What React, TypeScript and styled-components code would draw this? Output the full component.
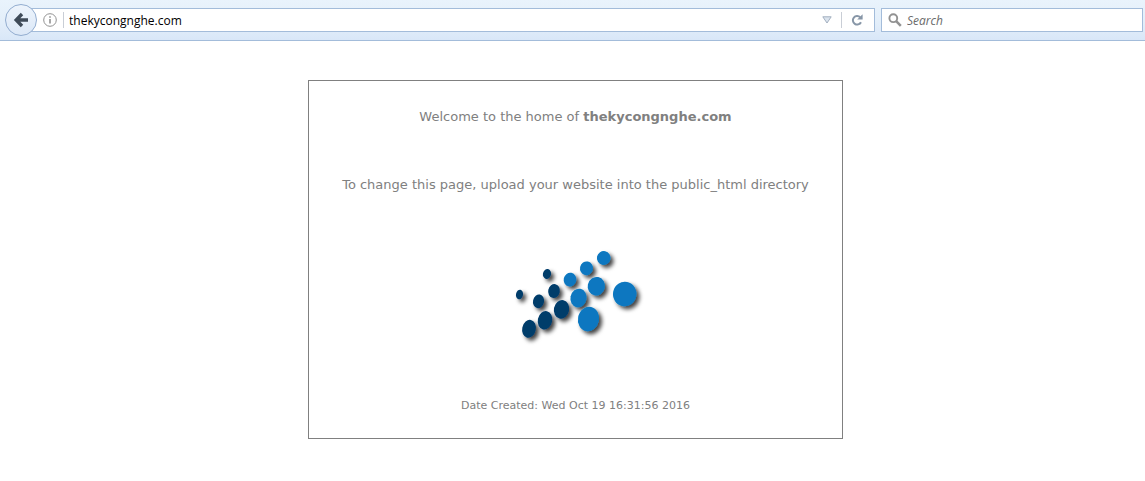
import React from "react";
import styled, { createGlobalStyle } from "styled-components";

const GlobalStyle = createGlobalStyle`
  * { box-sizing: border-box; }
  body { margin: 0; background: #fff; }
`;

const Toolbar = styled.header`
  display: flex;
  align-items: center;
  height: 41px;
  padding: 0 2px 0 5px;
  border-bottom: 1px solid #a3bcda;
  background: linear-gradient(#e9f3fc, #e4effa 50%, #d9e7f8);
`;

const BackButton = styled.button`
  flex: none;
  display: grid;
  place-items: center;
  width: 32px;
  height: 32px;
  padding: 0;
  border: 1px solid #93add0;
  border-radius: 50%;
  background: linear-gradient(#edf4fc, #dce8f7);
  z-index: 1;
`;

const Field = styled.form`
  display: flex;
  align-items: center;
  height: 24px;
  border: 1px solid #a3bcda;
  background: #fff;
`;

const AddressField = styled(Field)`
  flex: 1;
  min-width: 0;
  margin: 0 6px 0 -8px;
  padding: 0 11px 0 13px;
`;

const SearchField = styled(Field)`
  flex: 0 1 262px;
  min-width: 0;
  padding: 0 6px;
  gap: 5px;
`;

const TextInput = styled.input`
  flex: 1;
  min-width: 0;
  padding: 0;
  border: 0;
  outline: 0;
  background: transparent;
  color: #000;
  font: 12px "Open Sans", "Noto Sans", sans-serif;
  &::placeholder { color: #6b6b6b; font-style: italic; opacity: 1; }
`;

const IconButton = styled.button`
  flex: none;
  display: grid;
  place-items: center;
  padding: 0;
  border: 0;
  background: none;
`;

const Divider = styled.span<{ $before: number; $after: number }>`
  flex: none;
  width: 1px;
  height: 16px;
  margin: 0 ${(p) => p.$after}px 0 ${(p) => p.$before}px;
  background: #c9ced6;
`;

const Page = styled.main`
  display: flex;
  justify-content: center;
  padding: 39px 0 39px 6px;
`;

const Notice = styled.section`
  display: flex;
  flex-direction: column;
  align-items: center;
  padding: 28px 33px 25px;
  border: 1px solid #808080;
  color: #808080;
  font: 13px/16px Verdana, "DejaVu Sans", sans-serif;
  text-align: center;
`;

const Line = styled.p`
  margin: 0 0 52px;
`;

const Logo = styled.svg`
  display: block;
  margin-bottom: 53px;
`;

const Created = styled.p`
  margin: 0;
  font-size: 11px;
  line-height: 14px;
`;

type Dot = [x: number, y: number, rx: number, ry: number];

const navyDots: Dot[] = [
  [14.5, 54.5, 3.5, 4.9],
  [42, 34, 4.1, 5],
  [33.5, 61.3, 5.5, 6.9],
  [49, 51, 5.8, 7],
  [24, 88.8, 6.8, 9.1],
  [40, 80.3, 7.2, 9.3],
  [56.5, 69.4, 7.6, 9.4],
];

const blueDots: Dot[] = [
  [65, 39.6, 6.3, 6.9],
  [81.5, 28.3, 6.5, 6.9],
  [98.7, 18, 6.8, 7],
  [73.5, 58, 8, 9.4],
  [91.3, 46.2, 8.6, 9.3],
  [83.5, 79, 10.5, 12.3],
  [119.7, 54, 11.7, 12.2],
];

function Dots({ dots, fill }: { dots: Dot[]; fill: string }) {
  return (
    <g fill={fill}>
      {dots.map(([x, y, rx, ry]) => (
        <ellipse key={`${x}-${y}`} cx={x} cy={y} rx={rx} ry={ry} transform={`rotate(12 ${x} ${y})`} />
      ))}
    </g>
  );
}

export default function App() {
  const stop = (e: React.FormEvent) => e.preventDefault();
  return (
    <>
      <GlobalStyle />
      <Toolbar>
        <BackButton type="button" aria-label="Back">
          <svg width="16" height="16" viewBox="0 0 16 16" fill="none" stroke="#3f4b59" strokeWidth="3.4">
            <path d="M9 2 3.2 8 9 14M3 8h12" />
          </svg>
        </BackButton>
        <AddressField onSubmit={stop}>
          <IconButton type="button" aria-label="Site information">
            <svg width="14" height="14" viewBox="0 0 14 14" fill="none" stroke="#929292">
              <circle cx="7" cy="7" r="6.3" />
              <path d="M7 6v4.5M7 3.2v1.6" strokeWidth="1.6" />
            </svg>
          </IconButton>
          <Divider $before={6} $after={5} />
          <TextInput aria-label="Address" defaultValue="thekycongnghe.com" />
          <IconButton type="button" aria-label="Show history">
            <svg width="10" height="8" viewBox="0 0 10 8" fill="#dbe4ee" stroke="#a3afbf">
              <path d="M.8.8h8.4L5 7z" />
            </svg>
          </IconButton>
          <Divider $before={9} $after={9} />
          <IconButton type="button" aria-label="Reload">
            <svg width="12" height="12" viewBox="0 0 12 12" fill="none">
              <path d="M9.2 3.2A4.3 4.3 0 1 0 10 8.2" stroke="#8796a7" strokeWidth="2" />
              <path d="M11.6.3v5.2H6.2z" fill="#8796a7" />
            </svg>
          </IconButton>
        </AddressField>
        <SearchField onSubmit={stop} role="search">
          <IconButton type="submit" aria-label="Submit search">
            <svg width="14" height="14" viewBox="0 0 14 14" fill="none" stroke="#929292">
              <circle cx="5.3" cy="5.2" r="3.9" strokeWidth="1.9" />
              <path d="m8.2 8.2 4.6 4.6" strokeWidth="2.5" />
            </svg>
          </IconButton>
          <TextInput aria-label="Search" placeholder="Search" />
        </SearchField>
      </Toolbar>
      <Page>
        <Notice>
          <Line>
            Welcome to the home of <b>thekycongnghe.com</b>
          </Line>
          <Line>To change this page, upload your website into the public_html directory</Line>
          <Logo width="140" height="101" viewBox="0 5 140 101" role="img" aria-label="Logo">
            <defs>
              <filter id="shadow" x="-10%" y="-10%" width="125%" height="125%">
                <feDropShadow dx="3" dy="3" stdDeviation="2" floodColor="#000" floodOpacity="0.75" />
              </filter>
            </defs>
            <g filter="url(#shadow)">
              <Dots dots={navyDots} fill="#033c6b" />
              <Dots dots={blueDots} fill="#0877c0" />
            </g>
          </Logo>
          <Created>Date Created: Wed Oct 19 16:31:56 2016</Created>
        </Notice>
      </Page>
    </>
  );
}
